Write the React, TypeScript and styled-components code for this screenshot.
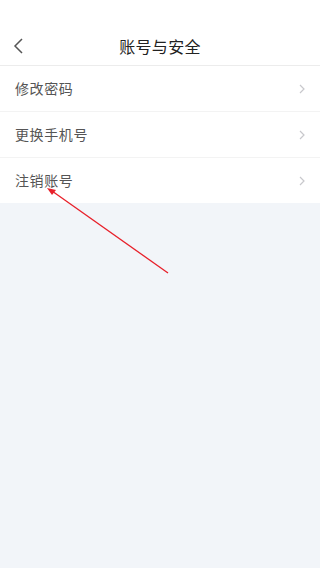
import React from "react";
import styled, { createGlobalStyle } from "styled-components";

const Global = createGlobalStyle`
  html, body { margin: 0; padding: 0; background: #f2f5f9; }
  body { font-family: "Noto Sans CJK SC", "Noto Sans", sans-serif; }
`;

const Page = styled.div`
  position: relative;
  width: 320px;
  min-height: 568px;
  background: #f2f5f9;
`;

const Top = styled.div`
  background: #fff;
  padding-top: 28px;
`;

const Header = styled.div`
  height: 37px;
  display: flex;
  align-items: center;
  justify-content: center;
  position: relative;
  border-bottom: 1px solid #ececec;
`;

const Back = styled.div`
  position: absolute;
  left: 12px;
  top: 8px;
  width: 14px;
  height: 20px;
  display: flex;
`;

const Title = styled.div`
  font-size: 16px;
  color: #222;
  letter-spacing: 0.3px;
  margin-bottom: 2px;
`;

const List = styled.div`
  background: #fff;
`;

const Row = styled.div<{ $last?: boolean }>`
  height: 45px;
  display: flex;
  align-items: center;
  justify-content: space-between;
  padding: 0 14px 0 15px;
  border-bottom: ${(p) => (p.$last ? "none" : "1px solid #f3f3f3")};
  box-sizing: content-box;
`;

const Label = styled.div`
  font-size: 14px;
  color: #555;
  letter-spacing: 0.6px;
  margin-bottom: 2px;
`;

const Arrow = styled.svg`
  position: absolute;
  left: 0;
  top: 0;
  pointer-events: none;
`;

const items = ["修改密码", "更换手机号", "注销账号"];

export default function App() {
  return (
    <Page>
      <Global />
      <Top>
        <Header>
          <Back>
            <svg width="14" height="20" viewBox="0 0 14 20">
              <path d="M10 3 L3 10 L10 17" fill="none" stroke="#555" strokeWidth="1.5" />
            </svg>
          </Back>
          <Title>账号与安全</Title>
        </Header>
        <List>
          {items.map((t, i) => (
            <Row key={t} $last={i === items.length - 1}>
              <Label>{t}</Label>
              <svg width="8" height="12" viewBox="0 0 8 12">
                <path d="M2 2 L6 6 L2 10" fill="none" stroke="#c8c8cc" strokeWidth="1.2" />
              </svg>
            </Row>
          ))}
        </List>
      </Top>
      <Arrow width="320" height="568" viewBox="0 0 320 568">
        <line x1="168" y1="273" x2="52" y2="191" stroke="#e8202a" strokeWidth="1.3" />
        <polygon points="47,188 56,190 52,195" fill="#e8202a" />
      </Arrow>
    </Page>
  );
}
